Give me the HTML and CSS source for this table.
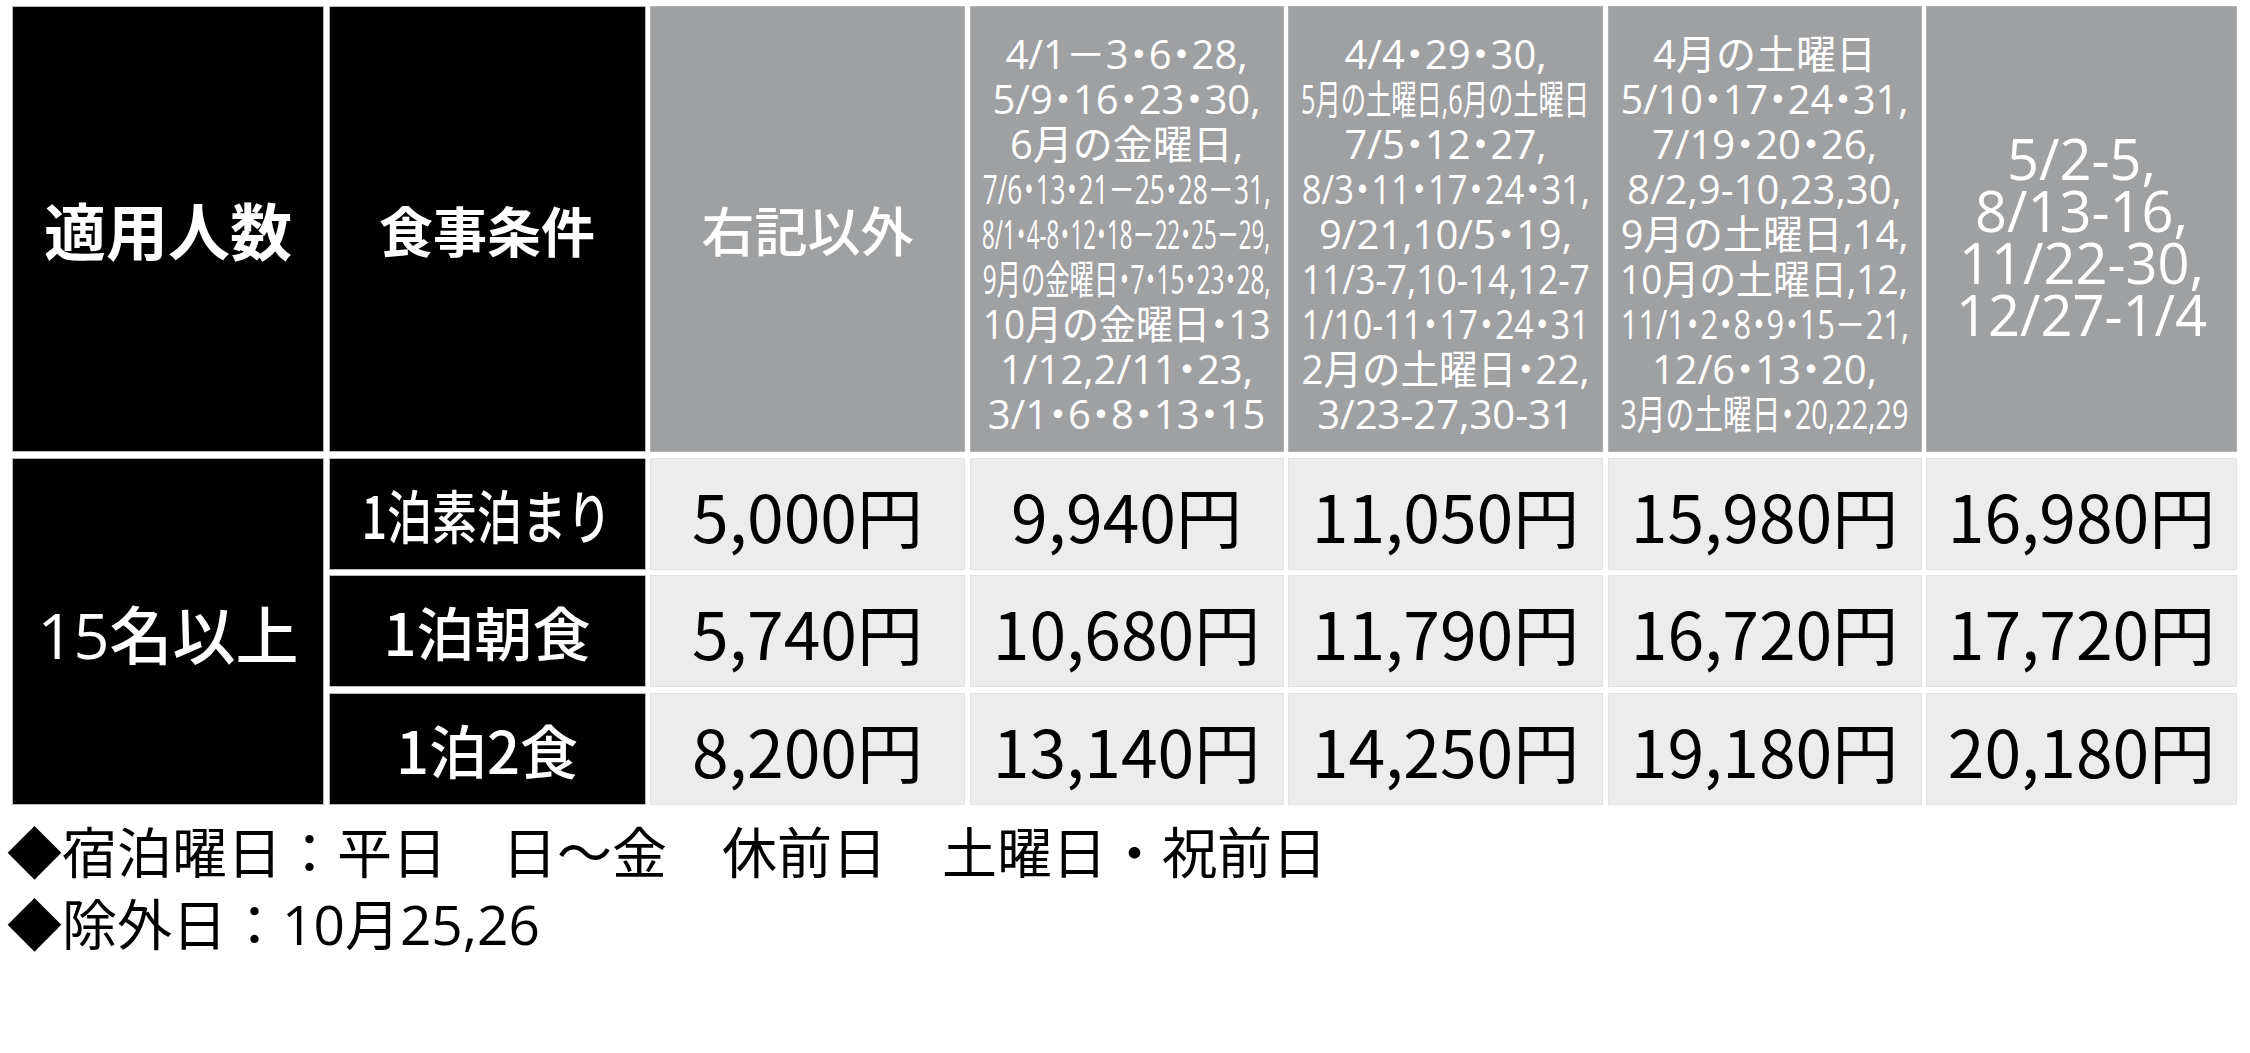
FILE: index.html
```html
<!DOCTYPE html>
<html lang="ja">
<head>
<meta charset="utf-8">
<title>料金表</title>
<link rel="stylesheet" href="styles.css">
</head>
<body>
<div class="page">
  <div class="rates">
    <div class="cell head dark big">適用人数</div>
    <div class="cell head dark mid">食事条件</div>
    <div class="cell head gray label">右記以外</div>
    <div class="cell head gray">
      <div class="dates">
        <span class="ln">4/1－3・6・28,</span>
        <span class="ln">5/9・16・23・30,</span>
        <span class="ln">6月の金曜日,</span>
        <span class="ln">7/6・13・21－25・28－31,</span>
        <span class="ln">8/1・4-8・12・18－22・25－29,</span>
        <span class="ln">9月の金曜日・7・15・23・28,</span>
        <span class="ln">10月の金曜日・13</span>
        <span class="ln">1/12,2/11・23,</span>
        <span class="ln">3/1・6・8・13・15</span>
      </div>
    </div>
    <div class="cell head gray">
      <div class="dates">
        <span class="ln">4/4・29・30,</span>
        <span class="ln">5月の土曜日,6月の土曜日</span>
        <span class="ln">7/5・12・27,</span>
        <span class="ln">8/3・11・17・24・31,</span>
        <span class="ln">9/21,10/5・19,</span>
        <span class="ln">11/3-7,10-14,12-7</span>
        <span class="ln">1/10-11・17・24・31</span>
        <span class="ln">2月の土曜日・22,</span>
        <span class="ln">3/23-27,30-31</span>
      </div>
    </div>
    <div class="cell head gray">
      <div class="dates">
        <span class="ln">4月の土曜日</span>
        <span class="ln">5/10・17・24・31,</span>
        <span class="ln">7/19・20・26,</span>
        <span class="ln">8/2,9-10,23,30,</span>
        <span class="ln">9月の土曜日,14,</span>
        <span class="ln">10月の土曜日,12,</span>
        <span class="ln">11/1・2・8・9・15－21,</span>
        <span class="ln">12/6・13・20,</span>
        <span class="ln">3月の土曜日・20,22,29</span>
      </div>
    </div>
    <div class="cell head gray">
      <div class="dates large">
        <span class="ln">5/2-5,</span>
        <span class="ln">8/13-16,</span>
        <span class="ln">11/22-30,</span>
        <span class="ln">12/27-1/4</span>
      </div>
    </div>

    <div class="cell dark people">15名以上</div>

    <div class="cell dark meal"><span class="squeeze">1泊素泊まり</span></div>
    <div class="cell price">5,000円</div>
    <div class="cell price">9,940円</div>
    <div class="cell price">11,050円</div>
    <div class="cell price">15,980円</div>
    <div class="cell price">16,980円</div>

    <div class="cell dark meal">1泊朝食</div>
    <div class="cell price">5,740円</div>
    <div class="cell price">10,680円</div>
    <div class="cell price">11,790円</div>
    <div class="cell price">16,720円</div>
    <div class="cell price">17,720円</div>

    <div class="cell dark meal">1泊2食</div>
    <div class="cell price">8,200円</div>
    <div class="cell price">13,140円</div>
    <div class="cell price">14,250円</div>
    <div class="cell price">19,180円</div>
    <div class="cell price">20,180円</div>
  </div>

  <div class="notes">
    <p>◆宿泊曜日：平日　日～金　休前日　土曜日・祝前日</p>
    <p>◆除外日：10月25,26</p>
  </div>
</div>
<script src="script.js"></script>
</body>
</html>
```

FILE: styles.css
```css
* {
  box-sizing: border-box;
}

html, body {
  margin: 0;
  padding: 0;
  background: #ffffff;
}

body {
  font-family: "Noto Sans CJK JP", "Noto Sans", sans-serif;
  color: #000000;
}

.page {
  width: 2250px;
  height: 1053px;
  padding: 6px 0 0 0;
}

.rates {
  margin-left: 12px;
  display: grid;
  grid-template-columns: 312px 317px 315px 314px 315px 314px 311px;
  grid-template-rows: 446px 112px 112px 112px;
  column-gap: 4.5px;
  row-gap: 5.5px;
}

.cell {
  display: flex;
  align-items: center;
  justify-content: center;
  overflow: visible;
  border: 1px solid #d2d2d2;
  white-space: nowrap;
}

.dark {
  background: #000000;
  color: #ffffff;
  border-color: #b8b8b8;
}

.gray {
  background: #9fa0a2;
  color: #ffffff;
  border-color: #b0b1b3;
}

.big {
  font-size: 62px;
  font-weight: 700;
}

.mid {
  font-size: 54px;
  font-weight: 700;
}

.label {
  font-size: 53px;
  font-weight: 500;
}

.dates {
  display: flex;
  flex-direction: column;
  align-items: center;
  font-family: "Open Sans", "Noto Sans CJK JP", sans-serif;
  font-feature-settings: "halt";
  font-size: 40px;
  line-height: 45px;
  padding-top: 8px;
}

.dates.large {
  font-size: 56px;
  line-height: 52px;
  padding-top: 14px;
}

.ln {
  display: block;
  white-space: nowrap;
  transform-origin: center center;
}

.people {
  grid-column: 1;
  grid-row: 2 / span 3;
  font-family: "Open Sans", "Noto Sans CJK JP", sans-serif;
  font-size: 63px;
  font-weight: 500;
}

.meal {
  font-size: 58px;
  font-weight: 500;
}

.squeeze {
  display: inline-block;
  transform-origin: center center;
}

.price {
  background: #ececec;
  border-color: #e2e2e2;
  font-size: 66px;
  font-weight: 400;
}

.notes {
  margin: 11px 0 0 7px;
  font-family: "Open Sans", "Noto Sans CJK JP", sans-serif;
  font-size: 55px;
  line-height: 72px;
}

.notes p {
  margin: 0;
  white-space: nowrap;
}
```

FILE: script.js
```js
function fitWidth(el, max) {
  var w = el.getBoundingClientRect().width;
  if (w > max) {
    el.style.transform = "scaleX(" + (max / w).toFixed(4) + ")";
  }
}

document.querySelectorAll(".dates .ln").forEach(function (el) {
  fitWidth(el, 288);
});

document.querySelectorAll(".squeeze").forEach(function (el) {
  fitWidth(el, 250);
});
```
